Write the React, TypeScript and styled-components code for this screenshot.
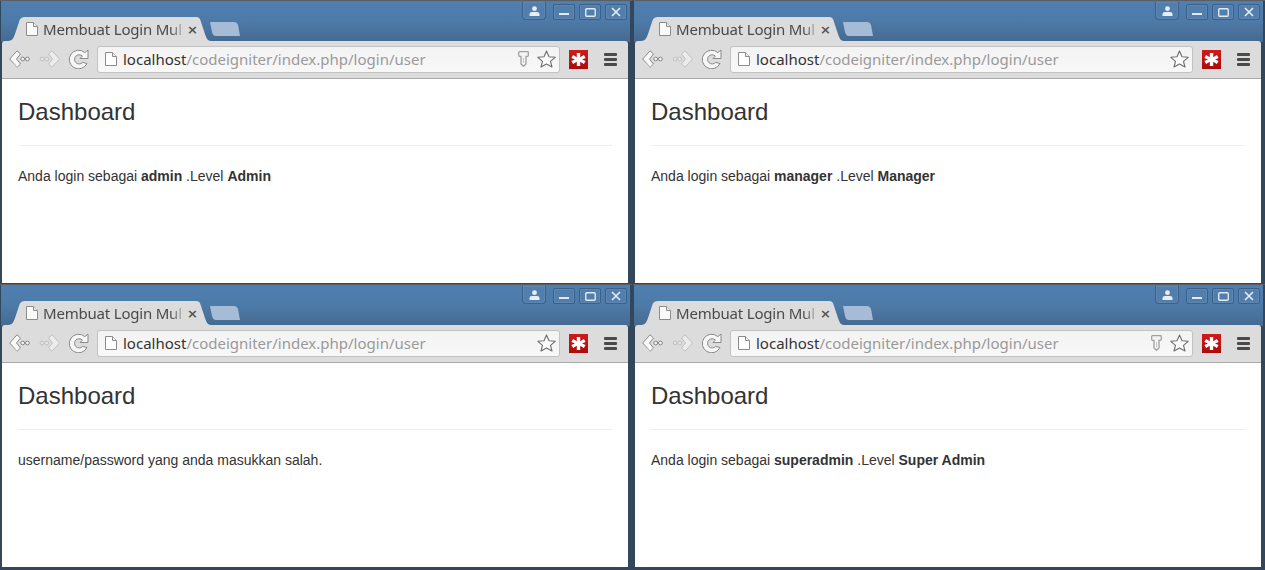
import { FC, ReactNode } from "react";
import styled, { createGlobalStyle } from "styled-components";

// #region styled
const GlobalStyle = createGlobalStyle`
  html, body {
    margin: 0;
    padding: 0;
    background: #34475a;
    overflow: hidden;
  }
`

const Desktop = styled.div`
  display: grid;
  grid-template-columns: 632px 632px;
  grid-template-rows: 284px 284px;
  column-gap: 1px;
  width: 1265px;
  height: 570px;
  overflow: hidden;
`

const Window = styled.div`
  display: flex;
  flex-direction: column;
  padding: 0 4px 0 2px;
  border-top: 1px solid #5a5f66;
  background: linear-gradient(to bottom, #4f7fb0 0, #4d7aa8 20px, #466a90 41px, #34475a 41px);
  box-shadow: inset 1px 0 0 #33475c, inset -2px 0 0 #33475c;
`

const TitleBar = styled.div`
  display: flex;
  align-items: flex-start;
  flex: 0 0 40px;
  padding-left: 6px;
`

const Tab = styled.div`
  display: flex;
  align-items: center;
  box-sizing: border-box;
  width: 203px;
  height: 24px;
  margin-top: 16px;
  padding: 0 13px 0 18px;
  background: #dcdcdc;
  clip-path: path("M0 24 C5 24 6 20 8 14 L11 5 C12 1 14 0 18 0 L187 0 C191 0 192 1 193 5 L196 14 C198 20 199 24 203 24 Z");
`

const TabIcon = styled.svg`
  flex: none;
  width: 12px;
  height: 14px;
  margin-right: 5px;
`

const TabTitle = styled.span`
  flex: 1;
  white-space: nowrap;
  font: 15px "Noto Sans", sans-serif;
  letter-spacing: -0.2px;
  color: #4a4a4a;
  -webkit-mask-image: linear-gradient(to right, #000 88%, transparent 100%);
  mask-image: linear-gradient(to right, #000 88%, transparent 100%);
`

const TabClose = styled.span`
  flex: none;
  font: bold 13px "DejaVu Sans", sans-serif;
  color: #555;
`

const NewTab = styled.div`
  flex: none;
  width: 30px;
  height: 14px;
  margin: 21px 0 0 -1px;
  background: #a6bcd6;
  clip-path: path("M0 0 L24 0 C26 0 27 1 28 3 L30 14 L6 14 C4 14 3 13 2 10 Z");
`

const WindowControls = styled.div`
  display: flex;
  align-items: flex-start;
  gap: 4px;
  margin-left: auto;
  padding: 3px 1px 0 0;
`

const ControlButton = styled.div<{ wide?: boolean }>`
  display: flex;
  align-items: center;
  justify-content: center;
  box-sizing: border-box;
  width: ${props => (props.wide ? "24px" : "22px")};
  height: ${props => (props.wide ? "19px" : "16px")};
  margin-right: ${props => (props.wide ? "3px" : "0")};
  margin-top: ${props => (props.wide ? "-3px" : "0")};
  padding-top: ${props => (props.wide ? "1px" : "0")};
  border: 1px solid #3b608a;
  border-top-color: ${props => (props.wide ? "transparent" : "#3b608a")};
  border-radius: ${props => (props.wide ? "0 0 4px 4px" : "2px")};
  background: #517eac;
  box-shadow: inset 0 0 0 1px rgba(255, 255, 255, 0.07);
`

const Toolbar = styled.div`
  display: flex;
  align-items: center;
  flex: 0 0 38px;
  box-sizing: border-box;
  padding: 0 11px 1px 7px;
  background: #dcdcdc;
  border-bottom: 1px solid #a9a9a9;
  border-radius: 3px 3px 0 0;
`

const NavIcon = styled.svg`
  flex: none;
  width: 22px;
  height: 20px;
  margin-right: 7px;
`

const Omnibox = styled.div`
  display: flex;
  align-items: center;
  flex: 1;
  box-sizing: border-box;
  height: 27px;
  margin: 0 9px 0 1px;
  padding: 0 3px 0 7px;
  background: linear-gradient(to bottom, #f3f3f3, #f8f8f8);
  border: 1px solid #c2c2c2;
  border-radius: 3px;
`

const PageIcon = styled.svg`
  flex: none;
  width: 12px;
  height: 14px;
  margin-right: 6px;
`

const Url = styled.div`
  flex: 1;
  white-space: nowrap;
  font: 15px "Noto Sans", sans-serif;
  color: #9a9a9a;

  b {
    font-weight: 400;
    color: #333;
  }
`

const KeyIcon = styled.svg`
  flex: none;
  width: 11px;
  height: 16px;
  margin-right: 8px;
`

const StarIcon = styled.svg`
  flex: none;
  width: 19px;
  height: 18px;
`

const LastPass = styled.svg`
  flex: none;
  width: 19px;
  height: 19px;
  margin-right: 16px;
`

const Menu = styled.div`
  display: flex;
  flex-direction: column;
  gap: 2px;
  flex: none;
  width: 13px;

  i {
    display: block;
    height: 3px;
    border-radius: 1px;
    background: #4a4a4a;
  }
`

const Page = styled.div`
  flex: 1;
  margin-bottom: 1px;
  padding: 16px 16px 0;
  background: #fff;
  font: 14px "Liberation Sans", Arial, sans-serif;
  color: #333;
`

const Title = styled.h1`
  margin: 0;
  padding: 4px 0 20px;
  border-bottom: 1px solid #eee;
  font: 500 24px/1.1 "Liberation Sans", Arial, sans-serif;
  color: #333;
`

const Message = styled.p`
  margin: 21px 0 0;
  line-height: 18px;
`
// #endregion

const Back = () => (
  <NavIcon viewBox="0 0 22 20">
    <path d="M.7 10 L8 1.8 L11.5 5 L7.5 10 L11.5 15 L8 18.2 Z" fill="#f8f8f8" stroke="#8a8a8a" strokeLinejoin="round" />
    <path d="M2 11.5 L8 18 L11 15.3" fill="none" stroke="#bcbcbc" />
    <circle cx="13.7" cy="10" r="1.9" fill="#f2f2f2" stroke="#858585" />
    <circle cx="18.4" cy="10" r="1.9" fill="#f2f2f2" stroke="#858585" />
  </NavIcon>
)

const Forward = () => (
  <NavIcon viewBox="0 0 22 20">
    <path d="M21.5 10 L14 1.8 L10.5 5 L14.5 10 L10.5 15 L14 18.2 Z" fill="#ececec" stroke="#c0c0c0" strokeLinejoin="round" />
    <circle cx="4" cy="10" r="1.9" fill="#e6e6e6" stroke="#c0c0c0" />
    <circle cx="8.7" cy="10" r="1.9" fill="#e6e6e6" stroke="#c0c0c0" />
  </NavIcon>
)

const Reload = () => (
  <NavIcon viewBox="0 0 22 20">
    <path d="M19 14.5 A9.3 9.3 0 1 1 16.8 3.6 L20 1 V9.5 H12 L14.4 7.1 A4.6 4.6 0 1 0 14.6 13.4 Z" fill="#f6f6f6" stroke="#8a8a8a" strokeLinejoin="round" transform="translate(1 0)" />
  </NavIcon>
)

const Avatar = () => (
  <svg width="11" height="10" viewBox="0 0 11 10">
    <circle cx="5.5" cy="2.7" r="2.4" fill="#e6edf4" />
    <path d="M0.5 10 V8 Q0.5 6 3 6 H8 Q10.5 6 10.5 8 V10 Z" fill="#e6edf4" />
  </svg>
)

const Minimize = () => (
  <svg width="10" height="10" viewBox="0 0 10 10">
    <rect x="0" y="6" width="10" height="2" fill="#e3eaf2" />
  </svg>
)

const Restore = () => (
  <svg width="11" height="9" viewBox="0 0 11 9">
    <rect x="0.75" y="0.75" width="9.5" height="7.5" rx="1" fill="none" stroke="#e3eaf2" strokeWidth="1.4" />
  </svg>
)

const Close = () => (
  <svg width="10" height="10" viewBox="0 0 10 10">
    <path d="M1 1 L9 9 M9 1 L1 9" stroke="#e8eef5" strokeWidth="1.6" />
  </svg>
)

interface IBrowser {
  hasKey?: boolean
  children: ReactNode
}

const Browser: FC<IBrowser> = ({ hasKey, children }) => (
  <Window>
    <TitleBar>
      <Tab>
        <TabIcon viewBox="0 0 12 14">
          <path d="M.5 .5 H7.5 L11.5 4.5 V13.5 H.5 Z" fill="#fafafa" stroke="#8c8c8c" />
          <path d="M7.5 .5 V4.5 H11.5" fill="#eee" stroke="#8c8c8c" />
        </TabIcon>
        <TabTitle>Membuat Login Mul</TabTitle>
        <TabClose>×</TabClose>
      </Tab>
      <NewTab />
      <WindowControls>
        <ControlButton wide><Avatar /></ControlButton>
        <ControlButton><Minimize /></ControlButton>
        <ControlButton><Restore /></ControlButton>
        <ControlButton><Close /></ControlButton>
      </WindowControls>
    </TitleBar>
    <Toolbar>
      <Back />
      <Forward />
      <Reload />
      <Omnibox>
        <PageIcon viewBox="0 0 12 14">
          <path d="M.5 .5 H7.5 L11.5 4.5 V13.5 H.5 Z" fill="#fff" stroke="#8c8c8c" />
          <path d="M7.5 .5 V4.5 H11.5" fill="#eee" stroke="#8c8c8c" />
        </PageIcon>
        <Url><b>localhost</b>/codeigniter/index.php/login/user</Url>
        {hasKey && (
          <KeyIcon viewBox="0 0 11 16">
            <path d="M1.5 .7 H9.5 Q10.3 .7 10.3 1.5 V4.5 Q10.3 5.3 9.5 5.3 H8 V13 L5.5 15.3 L3 13 V5.3 H1.5 Q.7 5.3 .7 4.5 V1.5 Q.7 .7 1.5 .7 Z" fill="#f4f4f4" stroke="#a0a0a0" strokeWidth="1.3" />
            <path d="M5.5 7 V12" stroke="#c6c6c6" />
          </KeyIcon>
        )}
        <StarIcon viewBox="0 0 19 18">
          <path d="M9.5 1 L12 6.8 L18.2 7.3 L13.5 11.3 L15 17 L9.5 14 L4 17 L5.5 11.3 L.8 7.3 L7 6.8 Z" fill="#fbfbfb" stroke="#6e6e6e" strokeWidth="1.1" strokeLinejoin="round" />
        </StarIcon>
      </Omnibox>
      <LastPass viewBox="0 0 19 19">
        <defs>
          <linearGradient id="lastpass-red" x1="0" y1="0" x2="0" y2="1">
            <stop offset="0" stopColor="#cf1b1b" />
            <stop offset="1" stopColor="#a90c0c" />
          </linearGradient>
        </defs>
        <rect width="19" height="19" fill="url(#lastpass-red)" />
        <path d="M7.8 3 H11.2 V7.2 L14.9 5 L16.6 7.9 L13 9.5 L16.6 11.1 L14.9 14 L11.2 11.8 V16 H7.8 V11.8 L4.1 14 L2.4 11.1 L6 9.5 L2.4 7.9 L4.1 5 L7.8 7.2 Z" fill="#fff" />
      </LastPass>
      <Menu><i /><i /><i /></Menu>
    </Toolbar>
    <Page>
      <Title>Dashboard</Title>
      {children}
    </Page>
  </Window>
)

const App: FC = () => (
  <>
    <GlobalStyle />
    <Desktop>
      <Browser hasKey>
        <Message>Anda login sebagai <strong>admin</strong> .Level <strong>Admin</strong></Message>
      </Browser>
      <Browser>
        <Message>Anda login sebagai <strong>manager</strong> .Level <strong>Manager</strong></Message>
      </Browser>
      <Browser>
        <Message>username/password yang anda masukkan salah.</Message>
      </Browser>
      <Browser hasKey>
        <Message>Anda login sebagai <strong>superadmin</strong> .Level <strong>Super Admin</strong></Message>
      </Browser>
    </Desktop>
  </>
)

export default App
